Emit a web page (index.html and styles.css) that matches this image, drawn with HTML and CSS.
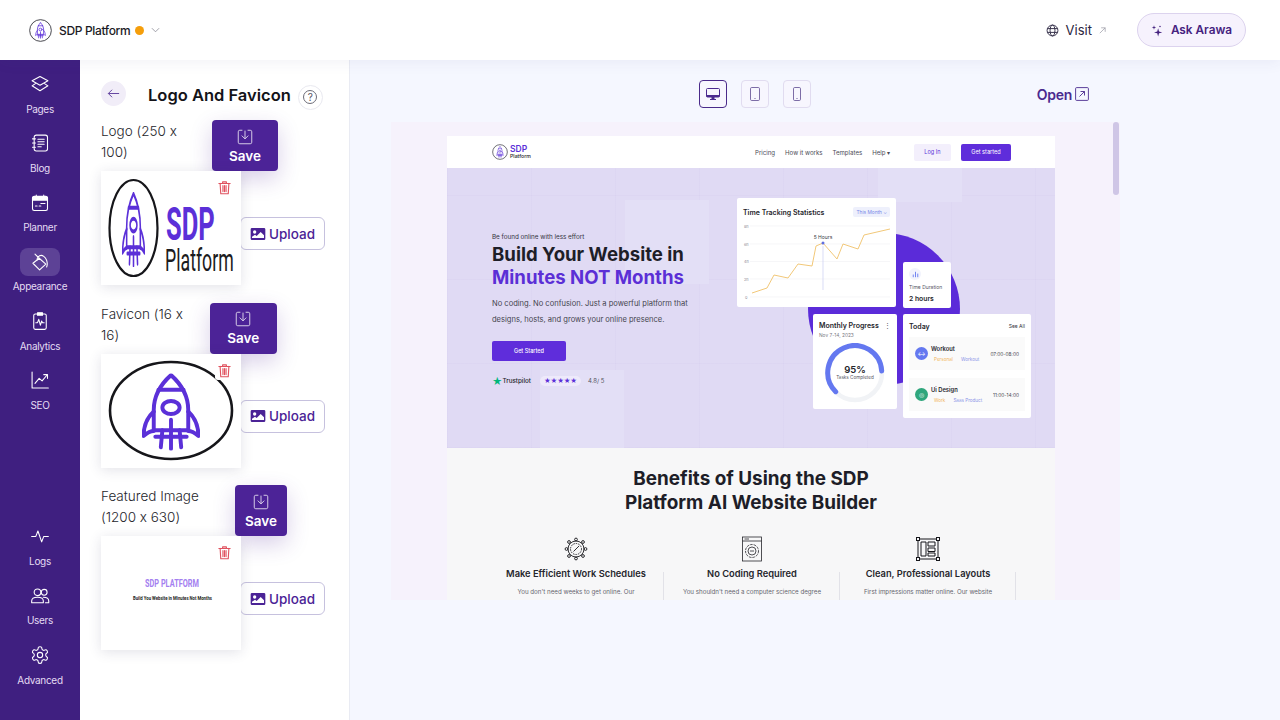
FILE: index.html
```html
<!DOCTYPE html>
<html lang="en">
<head>
<meta charset="utf-8">
<title>Logo And Favicon</title>
<link rel="stylesheet" href="styles.css">
</head>
<body>
<svg class="defs" width="0" height="0" aria-hidden="true">
  <symbol id="rocket" viewBox="13 3 74 95" preserveAspectRatio="none">
    <g fill="none" stroke="#5b30d8" stroke-width="5" stroke-linecap="round" stroke-linejoin="round">
      <path d="M50 5C36 17 28 31 28 48V73H72V48C72 31 64 17 50 5Z"/>
      <path d="M34 23H66"/>
      <ellipse cx="50" cy="45" rx="11" ry="8"/>
      <path d="M28 50C19 58 15 68 15 80C20 76 24 74 28 74"/>
      <path d="M72 50C81 58 85 68 85 80C80 76 76 74 72 74"/>
      <path d="M50 60V96M39 73L37 94M61 73L63 94M30 81H70"/>
    </g>
  </symbol>
  <symbol id="trash" viewBox="0 0 24 24">
    <g fill="none" stroke="#e0525f" stroke-width="1.8" stroke-linecap="round" stroke-linejoin="round">
      <path d="M3 5.500H21M9 5.500V3H15V5.500M5 5.500L6 22H18L19 5.500M9.500 9V18.500M12 9V18.500M14.500 9V18.500"/>
    </g>
  </symbol>
  <symbol id="save" viewBox="0 0 24 24">
    <g fill="none" stroke="#fff" stroke-width="1.200" stroke-linecap="round" stroke-linejoin="round" opacity=".85">
      <path d="M8 3H5A2 2 0 0 0 3 5V19A2 2 0 0 0 5 21H19A2 2 0 0 0 21 19V5A2 2 0 0 0 19 3H16"/>
      <path d="M12 4V14M8 10.500L12 14.500L16 10.500"/>
    </g>
  </symbol>
  <symbol id="picture" viewBox="0 0 24 20">
    <path fill="#4b2396" fill-rule="evenodd" d="M3 1H21A2 2 0 0 1 23 3V17A2 2 0 0 1 21 19H3A2 2 0 0 1 1 17V3A2 2 0 0 1 3 1ZM7 4.500A2.500 2.500 0 1 0 7 9.500A2.500 2.500 0 0 0 7 4.500ZM3 16H21V12L16 7L10 13L7.500 11L3 14Z"/>
  </symbol>
</svg>

<header class="topbar">
  <div class="brand">
    <svg class="brand-logo" viewBox="0 0 24 24"><circle cx="12" cy="12" r="11.300" fill="#fff" stroke="#2b2b33" stroke-width=".9"/><use href="#rocket" x="6.500" y="3.500" width="11" height="17"/></svg>
    <span class="brand-name">SDP Platform</span>
    <span class="status-dot"></span>
    <svg class="chevron" viewBox="0 0 10 6"><path d="M1 1L5 5L9 1" fill="none" stroke="#8b8b96" stroke-width=".9"/></svg>
  </div>
  <div class="top-actions">
    <svg class="globe" viewBox="0 0 24 24"><g fill="none" stroke="#2b2540" stroke-width="1.700"><circle cx="12" cy="12" r="10"/><ellipse cx="12" cy="12" rx="4.500" ry="10"/><path d="M2.500 8.500H21.500M2.500 15.500H21.500"/></g></svg>
    <span class="visit">Visit</span>
    <svg class="visit-arrow" viewBox="0 0 10 10"><path d="M2 8L8 2M3.500 2H8V6.500" fill="none" stroke="#9a9aa6" stroke-width=".8"/></svg>
    <button class="ask">
      <svg class="spark" viewBox="0 0 16 16"><path fill="#45227f" d="M9.500 5L10.700 9.300L15 10.500L10.700 11.700L9.500 16L8.300 11.700L4 10.500L8.300 9.300Z"/><path fill="#45227f" d="M4 1L4.700 3.300L7 4L4.700 4.700L4 7L3.300 4.700L1 4L3.300 3.300Z"/><circle cx="12" cy="2.500" r="1" fill="#45227f"/></svg>
      Ask Arawa
    </button>
  </div>
</header>

<div class="workspace">
  <nav class="rail">
    <div class="rail-group">
      <a class="rail-item"><span class="rail-icon"><svg viewBox="0 0 24 24"><path d="M12 3L2.500 8.200L12 13.400L21.500 8.200Z"/><path d="M6.500 11.500L2.500 14.200L12 20L21.500 14.200L17.500 11.500"/></svg></span><span class="rail-label">Pages</span></a>
      <a class="rail-item"><span class="rail-icon"><svg viewBox="0 0 24 24"><rect x="5" y="2.500" width="16" height="19" rx="2.500"/><path d="M9.500 7.500H17M9.500 10.500H17M9.500 13.500H17M9.500 16.500H13.500M3 7H6.500M3 12H6.500M3 17H6.500"/></svg></span><span class="rail-label">Blog</span></a>
      <a class="rail-item"><span class="rail-icon"><svg viewBox="0 0 24 24"><rect x="3" y="4" width="18" height="17" rx="2"/><path d="M3 5.500H21V8.500H3Z" fill="#fff"/><path d="M7.500 2.500V5M16.500 2.500V5M6.500 15.500H8.500M11 15.500H13M13 12.500H15M16 12.500H18"/></svg></span><span class="rail-label">Planner</span></a>
      <a class="rail-item is-active"><span class="rail-icon"><svg viewBox="0 0 24 24"><path d="M3.500 13.500L11 7.500L19 14.500L11.500 21.500Z"/><path d="M11 7.500L6 2.500M9 9.500C8 8 9.500 5.500 11.500 4.500C15 3 18.500 6 20 10C20.800 12.500 21 15.500 20 18"/></svg></span><span class="rail-label">Appearance</span></a>
      <a class="rail-item"><span class="rail-icon"><svg viewBox="0 0 24 24"><rect x="4.500" y="3.500" width="15" height="18.500" rx="1.800"/><path d="M9 2H15V5H9Z" fill="#fff"/><path d="M7 14H9L10.500 10L12.500 17L14 12L15 14H17"/></svg></span><span class="rail-label">Analytics</span></a>
      <a class="rail-item"><span class="rail-icon"><svg viewBox="0 0 24 24"><path d="M2.500 2.500V21.500H22"/><path d="M6 16L11 10L14.500 13L20.500 6M16.500 5.500H21V10"/></svg></span><span class="rail-label">SEO</span></a>
    </div>
    <div class="rail-group">
      <a class="rail-item"><span class="rail-icon"><svg viewBox="0 0 24 24"><path d="M2 12.500H7L9.500 6L14 19L16.500 12.500H22"/></svg></span><span class="rail-label">Logs</span></a>
      <a class="rail-item"><span class="rail-icon"><svg viewBox="0 0 24 24"><circle cx="9" cy="7.500" r="4"/><circle cx="17" cy="7.500" r="3.500"/><path d="M2 20V18C2 15 5 13.500 9 13.500C13 13.500 16 15 16 18V20Z"/><path d="M16 13.500C19.500 13.500 22.500 15 22.500 18V20H18.500"/></svg></span><span class="rail-label">Users</span></a>
      <a class="rail-item"><span class="rail-icon"><svg viewBox="0 0 24 24"><path d="M12.220 2h-.44a2 2 0 0 0-2 2v.18a2 2 0 0 1-1 1.730l-.43.25a2 2 0 0 1-2 0l-.15-.08a2 2 0 0 0-2.730.73l-.22.38a2 2 0 0 0 .73 2.730l.15.1a2 2 0 0 1 1 1.720v.51a2 2 0 0 1-1 1.740l-.15.09a2 2 0 0 0-.73 2.730l.22.38a2 2 0 0 0 2.730.73l.15-.08a2 2 0 0 1 2 0l.43.25a2 2 0 0 1 1 1.730V20a2 2 0 0 0 2 2h.44a2 2 0 0 0 2-2v-.18a2 2 0 0 1 1-1.730l.43-.25a2 2 0 0 1 2 0l.15.08a2 2 0 0 0 2.730-.73l.22-.39a2 2 0 0 0-.73-2.730l-.15-.08a2 2 0 0 1-1-1.740v-.5a2 2 0 0 1 1-1.740l.15-.09a2 2 0 0 0 .73-2.730l-.22-.38a2 2 0 0 0-2.730-.73l-.15.08a2 2 0 0 1-2 0l-.43-.25a2 2 0 0 1-1-1.730V4a2 2 0 0 0-2-2z"/><circle cx="12" cy="12" r="3.200"/></svg></span><span class="rail-label">Advanced</span></a>
    </div>
  </nav>

  <aside class="panel">
    <div class="panel-head">
      <button class="back"><svg viewBox="0 0 16 16"><path d="M14 8H2.500M6.500 4L2.500 8L6.500 12" fill="none" stroke="#5d3d9c" stroke-width="1"/></svg></button>
      <h1 class="panel-title">Logo And Favicon</h1>
      <span class="help"><span class="help-mark">?</span></span>
    </div>

    <section class="asset">
      <div class="asset-head">
        <div class="asset-label label-logo">Logo (250 x 100)</div>
        <button class="save save-logo"><svg><use href="#save"/></svg>Save</button>
      </div>
      <div class="asset-body">
        <div class="thumb">
          <svg class="thumb-art" viewBox="0 0 140 114">
            <ellipse cx="32.500" cy="57" rx="24" ry="48" fill="none" stroke="#16161a" stroke-width="2.200"/>
            <use href="#rocket" x="21" y="21" width="23" height="75"/>
            <text class="logo-sdp" transform="translate(65 69) scale(.56 1)" textLength="87" lengthAdjust="spacingAndGlyphs">SDP</text>
            <text class="logo-platform" transform="translate(64 100) scale(.55 1)" textLength="125" lengthAdjust="spacingAndGlyphs">Platform</text>
          </svg>
          <span class="trash"><svg><use href="#trash"/></svg></span>
        </div>
        <button class="upload"><svg><use href="#picture"/></svg>Upload</button>
      </div>
    </section>

    <section class="asset">
      <div class="asset-head">
        <div class="asset-label label-favicon">Favicon (16 x 16)</div>
        <button class="save save-favicon"><svg><use href="#save"/></svg>Save</button>
      </div>
      <div class="asset-body">
        <div class="thumb">
          <svg class="thumb-art" viewBox="0 0 140 114">
            <ellipse cx="70" cy="56.500" rx="61" ry="48.500" fill="none" stroke="#16161a" stroke-width="2.600"/>
            <use href="#rocket" x="41" y="19.500" width="58" height="77"/>
          </svg>
          <span class="trash"><svg><use href="#trash"/></svg></span>
        </div>
        <button class="upload"><svg><use href="#picture"/></svg>Upload</button>
      </div>
    </section>

    <section class="asset">
      <div class="asset-head">
        <div class="asset-label label-featured">Featured Image (1200 x 630)</div>
        <button class="save save-featured"><svg><use href="#save"/></svg>Save</button>
      </div>
      <div class="asset-body">
        <div class="thumb">
          <svg class="thumb-art" viewBox="0 0 140 114">
            <text class="feat-title" transform="translate(44 51) scale(.75 1)" textLength="72" lengthAdjust="spacingAndGlyphs">SDP PLATFORM</text>
            <text class="feat-sub" transform="translate(32 64) scale(.65 1)" textLength="121.500" lengthAdjust="spacingAndGlyphs">Build You Website in Minutes Not Months</text>
          </svg>
          <span class="trash"><svg><use href="#trash"/></svg></span>
        </div>
        <button class="upload"><svg><use href="#picture"/></svg>Upload</button>
      </div>
    </section>
  </aside>

  <main class="stage">
    <div class="stage-bar">
      <span></span>
      <div class="devices">
        <button class="device is-current"><svg viewBox="0 0 16 16"><rect x="1.500" y="2.500" width="13" height="8.500" rx="1" fill="none" stroke="#4b2a8f"/><path d="M1.500 9H14.500V11H1.500ZM6.500 11H9.500V13H6.500ZM5 13H11V14H5Z" fill="#4b2a8f"/></svg></button>
        <button class="device"><svg viewBox="0 0 16 16"><rect x="3.500" y="1.500" width="9" height="13" rx="1.200" fill="none" stroke="#5d4a90" stroke-width=".8"/><circle cx="8" cy="12.500" r=".6" fill="#5d4a90"/></svg></button>
        <button class="device"><svg viewBox="0 0 16 16"><rect x="4.500" y="1.500" width="7" height="13" rx="1.200" fill="none" stroke="#5d4a90" stroke-width=".8"/><circle cx="8" cy="12.500" r=".6" fill="#5d4a90"/></svg></button>
      </div>
      <a class="open">Open<svg viewBox="0 0 14 14"><rect x=".6" y=".6" width="12.800" height="12.800" rx="1" fill="none" stroke="#4b2a8f" stroke-width=".9"/><path d="M4.500 9.500L9.500 4.500M5.500 4.500H9.500V8.500" fill="none" stroke="#4b2a8f" stroke-width=".9"/></svg></a>
    </div>

    <div class="preview">
      <span class="scroll-thumb"></span>
      <div class="site">
        <div class="site-nav">
          <div class="site-logo">
            <svg viewBox="0 0 24 24"><circle cx="12" cy="12" r="11" fill="#fff" stroke="#2b2b33" stroke-width="1"/><use href="#rocket" x="6.500" y="3.500" width="11" height="17"/></svg>
            <div class="site-logo-text"><b>SDP</b><span>Platform</span></div>
          </div>
          <div class="site-links">
            <span>Pricing</span><span>How it works</span><span>Templates</span><span>Help ▾</span>
          </div>
          <span class="site-login">Log In</span>
          <span class="site-start">Get started</span>
        </div>

        <div class="hero">
          <div class="hero-copy">
            <p class="eyebrow">Be found online with less effort</p>
            <h2 class="hero-title">Build Your Website in<br><em>Minutes NOT Months</em></h2>
            <p class="hero-text">No coding. No confusion. Just a powerful platform that<br>designs, hosts, and grows your online presence.</p>
            <span class="hero-btn">Get Started</span>
            <div class="trust">
              <span class="tp-star">★</span><span class="tp-name">Trustpilot</span>
              <span class="tp-stars">★★★★★</span><span class="tp-score">4.8/ 5</span>
            </div>
          </div>

          <span class="blob"></span>

          <div class="card card-time">
            <div class="card-row"><b class="card-title">Time Tracking Statistics</b><span class="month">This Month ⌄</span></div>
            <svg class="chart" viewBox="0 0 159 85">
              <g stroke="#f0f0f4" stroke-width=".6"><path d="M13 4H153M13 22H153M13 39.500H153M13 57H153M13 75H153"/></g>
              <g class="axis"><text x="7" y="6">8h</text><text x="7" y="24">6h</text><text x="7" y="41">4h</text><text x="7" y="59">2h</text><text x="8" y="77">0</text></g>
              <path d="M86 24V68" stroke="#c9cdf2" stroke-width=".7"/>
              <path d="M15 71L30 66L37 53L51 56L61 42L75 44L79 24L86 21L100 37L106 22L121 27L127 13L153 7" fill="none" stroke="#f2c879" stroke-width="1"/>
              <circle cx="86" cy="21" r="1.500" fill="#5f6fe0"/>
              <text class="chart-tip" x="86" y="17" text-anchor="middle">5 Hours</text>
            </svg>
          </div>

          <div class="card card-duration">
            <span class="duration-icon"><svg viewBox="0 0 10 10"><path d="M2.500 8V5M5 8V2M7.500 8V4" stroke="#6478f0" stroke-width="1"/></svg></span>
            <span class="duration-label">Time Duration</span>
            <b class="duration-value">2 hours</b>
          </div>

          <div class="card card-progress">
            <div class="card-row"><b class="card-title">Monthly Progress</b><span class="dots">⋮</span></div>
            <span class="progress-date">Nov 7-14, 2023</span>
            <div class="ring">
              <svg viewBox="0 0 60 60"><circle cx="30" cy="30" r="27" fill="none" stroke="#f1f3f6" stroke-width="4.500"/><path d="M10.700 48.700A27 27 0 1 1 56.700 28" fill="none" stroke="#6478f0" stroke-width="5" stroke-linecap="round"/></svg>
              <div class="ring-text"><b>95%</b><span>Tasks Completed</span></div>
            </div>
          </div>

          <div class="card card-today">
            <div class="card-row today-head"><b class="today-title">Today</b><span class="see-all">See All</span></div>
            <div class="today-item">
              <span class="avatar avatar-blue">↔</span>
              <div class="today-main"><b>Workout</b><div class="tags"><i class="tag-y">Personal</i><i class="tag-b">Workout</i></div></div>
              <span class="today-time">07:00-08:00</span>
            </div>
            <div class="today-item">
              <span class="avatar avatar-green">◎</span>
              <div class="today-main"><b>Ui Design</b><div class="tags"><i class="tag-y">Work</i><i class="tag-b">Saas Product</i></div></div>
              <span class="today-time">11:00-14:00</span>
            </div>
          </div>
        </div>

        <div class="benefits">
          <h2 class="benefits-title">Benefits of Using the SDP<br>Platform AI Website Builder</h2>
          <div class="benefit-grid">
            <div class="benefit">
              <svg viewBox="0 0 26 26"><g fill="none" stroke="#17171c" stroke-width=".9"><circle cx="13" cy="13" r="8"/><circle cx="13" cy="13" r="5.500" stroke-dasharray="1.500 1"/><path d="M10.500 15.500L16 10"/><circle cx="13" cy="3.500" r="1.400"/><circle cx="13" cy="22.500" r="1.400"/><circle cx="3.500" cy="13" r="1.400"/><circle cx="22.500" cy="13" r="1.400"/><circle cx="6" cy="6" r="1.400"/><circle cx="20" cy="6" r="1.400"/><circle cx="6" cy="20" r="1.400"/><circle cx="20" cy="20" r="1.400"/></g></svg>
              <h3>Make Efficient Work Schedules</h3>
              <p>You don't need weeks to get online. Our</p>
            </div>
            <div class="benefit">
              <svg viewBox="0 0 26 26"><g fill="none" stroke="#26262c" stroke-width=".8"><rect x="3.500" y="1" width="19" height="24"/><path d="M3.500 5H22.500M5.500 3H10"/><circle cx="13" cy="15" r="6.500" stroke-dasharray="2.500 1"/><circle cx="13" cy="15" r="4"/><path d="M11 15L15 15"/></g></svg>
              <h3>No Coding Required</h3>
              <p>You shouldn't need a computer science degree</p>
            </div>
            <div class="benefit">
              <svg viewBox="0 0 26 26"><g fill="none" stroke="#17171c" stroke-width="1"><path d="M3 3H23V23H3Z"/><rect x="1.500" y="1.500" width="3" height="3" fill="#f7f7f8"/><rect x="21.500" y="1.500" width="3" height="3" fill="#f7f7f8"/><rect x="1.500" y="21.500" width="3" height="3" fill="#f7f7f8"/><rect x="21.500" y="21.500" width="3" height="3" fill="#f7f7f8"/><path d="M6 6H11V20H6ZM13 6H20V10H13ZM13 12H20V15.500H13ZM13 17H20V20H13Z"/></g></svg>
              <h3>Clean, Professional Layouts</h3>
              <p>First impressions matter online. Our website</p>
            </div>
          </div>
        </div>
      </div>
    </div>
  </main>
</div>
</body>
</html>
```
FILE: styles.css
```css
* { box-sizing: border-box; }
html, body { margin: 0; height: 100%; }
body {
  width: 1280px;
  height: 720px;
  overflow: hidden;
  display: flex;
  flex-direction: column;
  font-family: Inter, "Liberation Sans", sans-serif;
  font-feature-settings: "calt" 0;
  color: #17171c;
  background: #f5f7ff;
}
button { font-family: inherit; font-feature-settings: inherit; cursor: pointer; }
p, h1, h2, h3 { margin: 0; }
.defs { position: absolute; }

/* top bar */
.topbar {
  flex: 0 0 60px;
  position: relative;
  z-index: 3;
  display: flex;
  align-items: center;
  justify-content: space-between;
  padding: 0 34px 0 29px;
  background: #fff;
  box-shadow: 0 2px 14px rgba(60, 60, 130, .07);
}
.brand, .top-actions { display: flex; align-items: center; }
.brand-logo { width: 23px; height: 23px; }
.brand-name { margin-left: 7px; font-size: 12px; font-weight: 500; letter-spacing: -.35px; color: #1c1b25; }
.status-dot { width: 9px; height: 9px; margin-left: 5px; border-radius: 50%; background: #f59e0b; }
.chevron { width: 9px; height: 6px; margin-left: 7px; }
.globe { width: 13px; height: 13px; margin-right: 1px; }
.visit { margin-left: 6px; font-size: 13px; color: #2b2540; }
.visit-arrow { width: 9px; height: 9px; margin-left: 6px; }
.ask {
  display: flex;
  align-items: center;
  justify-content: center;
  gap: 8px;
  width: 109px;
  height: 34px;
  margin-left: 30px;
  padding: 0;
  border: 1px solid #dcd3ee;
  border-radius: 17px;
  background: #f6f2fd;
  font-size: 11.8px;
  font-weight: 600;
  color: #45227f;
}
.spark { width: 12px; height: 13px; }

.workspace { flex: 1; display: flex; min-height: 0; }

/* rail */
.rail {
  flex: 0 0 80px;
  display: flex;
  flex-direction: column;
  justify-content: space-between;
  padding: 10px 0 33.5px;
  background: #3f1f80;
}
.rail-group { display: flex; flex-direction: column; gap: 13.8px; }
.rail-item { display: flex; flex-direction: column; align-items: center; }
.rail-icon {
  display: flex;
  align-items: center;
  justify-content: center;
  width: 40px;
  height: 28px;
  border-radius: 8px;
}
.rail-icon svg {
  width: 20px;
  height: 20px;
  fill: none;
  stroke: #fff;
  stroke-width: 1.3;
  stroke-linejoin: round;
  stroke-linecap: round;
}
.rail-label { margin-top: 3.5px; font-size: 10px; letter-spacing: -.3px; line-height: 14px; color: #e4dcf3; }
.is-active .rail-icon { background: #5d4296; }

/* left panel */
.panel {
  flex: 0 0 270px;
  padding: 21px 0 0 21px;
  background: #fff;
  border-right: 1px solid #e9ebf3;
}
.panel-head { display: flex; align-items: center; height: 29px; margin-bottom: 10px; }
.back {
  width: 25px;
  height: 25px;
  padding: 5px;
  border: 0;
  border-radius: 50%;
  background: #f1edf8;
  transform: translateY(-2px);
}
.back svg { display: block; width: 15px; height: 15px; }
.panel-title { margin: 0 0 2px 22px; font-size: 16.5px; font-weight: 600; color: #131318; white-space: nowrap; }
.help {
  display: flex;
  align-items: center;
  justify-content: center;
  width: 25px;
  height: 25px;
  margin: 3px 0 0 7px;
  border: 1px solid #e9e9f0;
  border-radius: 50%;
}
.help-mark {
  width: 14px;
  height: 14px;
  border: 1px solid #6c6c78;
  border-radius: 50%;
  font-size: 10px;
  line-height: 12px;
  text-align: center;
  color: #55555f;
}
.asset { margin-bottom: 17.5px; }
.asset-head { display: flex; height: 51px; }
.asset-label {
  flex: none;
  padding-top: 1px;
  font-size: 13.5px;
  font-weight: 300;
  line-height: 21px;
  color: #26262c;
}
.label-logo { width: 111px; padding-right: 20px; }
.label-favicon { width: 108.5px; padding-right: 10px; }
.label-featured { width: 134px; }
.save {
  display: flex;
  flex-direction: column;
  align-items: center;
  justify-content: center;
  gap: 2px;
  height: 51px;
  padding: 0;
  border: 0;
  border-radius: 4px;
  background: #4c2397;
  box-shadow: 0 8px 22px rgba(76, 35, 151, .22);
  font-size: 13.5px;
  font-weight: 600;
  color: #fff;
}
.save svg { width: 18px; height: 18px; }
.save-logo { width: 66px; }
.save-favicon { width: 67.5px; }
.save-featured { width: 52px; }
.asset-body { display: flex; align-items: center; }
.thumb {
  position: relative;
  flex: none;
  width: 140px;
  height: 114px;
  background: #fff;
  box-shadow: 0 2px 12px rgba(50, 50, 90, .14);
}
.thumb-art { display: block; width: 140px; height: 114px; }
.trash {
  position: absolute;
  top: 7px;
  right: 7px;
  width: 19px;
  height: 19px;
  padding: 2px;
  border-radius: 3px;
  background: #fff;
}
.trash svg { display: block; width: 15px; height: 15px; }
.logo-sdp { font-family: Roboto, sans-serif; font-size: 47px; font-weight: 700; fill: #5b30d8; }
.logo-platform { font-family: Roboto, sans-serif; font-size: 32px; font-weight: 400; fill: #1b1b20; }
.feat-title { font-family: Roboto, sans-serif; font-size: 10px; font-weight: 700; fill: #a47ff0; }
.feat-sub { font-family: Roboto, sans-serif; font-size: 6px; font-weight: 700; fill: #1b1b20; }
.upload {
  display: flex;
  align-items: center;
  justify-content: center;
  gap: 3px;
  width: 85px;
  height: 33px;
  margin: 11px 0 0 -1px;
  padding: 0;
  border: 1px solid #c6c1de;
  border-radius: 6px;
  background: #fff;
  font-size: 13.5px;
  font-weight: 500;
  color: #4b2396;
}
.upload svg { width: 16px; height: 14px; }

/* stage */
.stage { flex: 1; min-width: 0; padding: 20px 160px 0 41px; }
.stage-bar {
  display: grid;
  grid-template-columns: 1fr auto 1fr;
  align-items: center;
  height: 28px;
  margin-bottom: 14px;
  padding: 0 31px 0 30px;
}
.devices { display: flex; gap: 14px; }
.device {
  width: 28px;
  height: 28px;
  padding: 5px;
  border: 1px solid #e1dcf0;
  border-radius: 4px;
  background: #f7f6fe;
}
.device svg { display: block; width: 16px; height: 16px; }
.device.is-current { border-color: #4a2a8a; }
.open {
  justify-self: end;
  display: flex;
  align-items: center;
  gap: 3px;
  font-size: 14px;
  font-weight: 600;
  letter-spacing: -.25px;
  color: #4b2a8f;
}
.open svg { width: 14px; height: 14px; }

.preview {
  position: relative;
  width: 729px;
  height: 478px;
  overflow: hidden;
  padding: 14px 0 0 56px;
  background: #f6f2fc;
}
.scroll-thumb {
  position: absolute;
  top: 0;
  right: 1px;
  width: 6px;
  height: 73px;
  border-radius: 3px;
  background: #cfc6e6;
}
.site { width: 608px; }
.site-nav {
  display: flex;
  align-items: center;
  height: 32px;
  padding: 0 44px 0 45px;
  background: #fff;
  font-size: 6.1px;
  color: #4a4a55;
}
.site-logo { display: flex; align-items: center; gap: 2px; width: 263px; }
.site-logo svg { width: 16px; height: 16px; }
.site-logo-text { display: flex; flex-direction: column; line-height: 1; }
.site-logo-text b { font-size: 8.5px; font-weight: 600; color: #5b30d8; line-height: 8px; }
.site-logo-text span { font-size: 5.2px; font-weight: 500; color: #26262c; line-height: 6px; }
.site-links { display: flex; gap: 10px; width: 159px; white-space: nowrap; }
.site-login, .site-start {
  display: flex;
  align-items: center;
  justify-content: center;
  height: 17px;
  border-radius: 2px;
  font-size: 5.6px;
}
.site-login { width: 37px; background: #f3effc; color: #5b30d8; }
.site-start { width: 50px; margin-left: 10px; background: #5f2ddb; color: #fff; }

.hero {
  position: relative;
  height: 280px;
  padding: 65px 0 0 45px;
  background-color: #e0daf4;
  background-image:
    linear-gradient(#e3dff6, #e3dff6),
    linear-gradient(#e3dff6, #e3dff6),
    linear-gradient(#e3dff6, #e3dff6),
    repeating-linear-gradient(90deg, rgba(120, 100, 190, .03) 0 1px, transparent 1px 84px),
    repeating-linear-gradient(0deg, rgba(120, 100, 190, .03) 0 1px, transparent 1px 84px);
  background-repeat: no-repeat, no-repeat, no-repeat, repeat, repeat;
  background-size: 84px 84px, 84px 34px, 84px 78px, auto, auto;
  background-position: 178px 32px, 431px 0, 93px 202px, 0 0, 0 0;
}
.hero-copy { position: relative; width: 215px; }
.eyebrow { font-size: 6.3px; line-height: 8px; color: #33333c; }
.hero-title {
  margin-top: 2px;
  font-size: 18.6px;
  font-weight: 700;
  line-height: 23px;
  color: #1e1e28;
  white-space: nowrap;
}
.hero-title em { font-style: normal; color: #5b2fd6; }
.hero-text {
  margin-top: 6.5px;
  font-size: 7.55px;
  line-height: 16px;
  color: #45454f;
  white-space: nowrap;
}
.hero-btn {
  display: flex;
  align-items: center;
  justify-content: center;
  width: 74px;
  height: 20px;
  margin-top: 13px;
  border-radius: 2px;
  background: #5f2ddb;
  font-size: 5.5px;
  font-weight: 500;
  color: #fff;
}
.trust { display: flex; align-items: center; margin-top: 14px; white-space: nowrap; }
.tp-star { font-size: 10px; line-height: 12px; color: #00b67a; }
.tp-name { margin-left: 0; font-size: 6.3px; font-weight: 500; color: #26262c; }
.tp-stars {
  margin-left: 9px;
  padding: 1px 4px;
  border-radius: 5px;
  background: #eeeafb;
  font-size: 6.5px;
  letter-spacing: -.2px;
  color: #5b30d8;
}
.tp-score { margin-left: 7px; font-size: 6px; color: #55555f; }

.blob {
  position: absolute;
  left: 361px;
  top: 65px;
  width: 152px;
  height: 152px;
  border-radius: 50%;
  background: #5b2bd9;
}
.card { position: absolute; border-radius: 2px; background: #fff; }
.card-row { display: flex; align-items: center; justify-content: space-between; }
.card-title { font-size: 7px; font-weight: 600; color: #26262c; white-space: nowrap; }
.card-time { left: 290px; top: 30px; width: 159px; height: 109px; padding: 9px 6px 0; }
.month {
  padding: 2px 3px;
  border-radius: 2px;
  background: #eef0fc;
  font-size: 4.8px;
  color: #7b88e8;
}
.chart { position: absolute; left: 0; top: 24px; width: 159px; height: 85px; }
.axis { font-size: 3.8px; fill: #8b8b96; }
.chart-tip { font-size: 5px; fill: #3a3a44; }
.card-duration {
  left: 456px;
  top: 94px;
  width: 48px;
  height: 46px;
  padding: 6px 6px 0;
  display: flex;
  flex-direction: column;
  align-items: flex-start;
}
.duration-icon {
  width: 12px;
  height: 12px;
  padding: 1.5px;
  border-radius: 50%;
  background: #f2f3fd;
}
.duration-icon svg { display: block; width: 9px; height: 9px; }
.duration-label { margin-top: 3px; font-size: 5px; line-height: 8px; color: #55555f; white-space: nowrap; }
.duration-value { margin-top: 3px; font-size: 6.8px; font-weight: 600; color: #26262c; white-space: nowrap; }
.card-progress { left: 366px; top: 146px; width: 84px; height: 95px; padding: 7px 6px 0; }
.dots { font-size: 7px; line-height: 8px; color: #55555f; }
.progress-date { display: block; margin-top: 2px; font-size: 4.8px; color: #77777f; }
.ring { position: absolute; left: 12px; top: 29px; width: 60px; height: 60px; }
.ring svg { display: block; width: 60px; height: 60px; }
.ring-text {
  position: absolute;
  inset: 0;
  display: flex;
  flex-direction: column;
  align-items: center;
  justify-content: center;
}
.ring-text b { font-size: 9.5px; line-height: 10px; font-weight: 600; color: #26262c; }
.ring-text span { font-size: 4.6px; line-height: 6px; color: #55555f; white-space: nowrap; }
.card-today { left: 456px; top: 146px; width: 128px; height: 104px; padding: 7px 6px 0; }
.today-head { height: 10px; margin-bottom: 6px; }
.today-title { font-size: 7px; font-weight: 600; color: #26262c; }
.see-all { font-size: 5px; color: #33333c; }
.today-item {
  display: flex;
  align-items: center;
  height: 33px;
  margin-bottom: 8px;
  padding: 0 6px;
  background: #fafafa;
}
.avatar {
  flex: none;
  display: flex;
  align-items: center;
  justify-content: center;
  width: 13px;
  height: 13px;
  border-radius: 50%;
  font-size: 6px;
  color: #fff;
}
.avatar-blue { background: #6478f0; }
.avatar-green { background: #2fa67c; }
.today-main { flex: 1; margin-left: 3px; }
.today-main b { display: block; font-size: 5.8px; line-height: 9px; font-weight: 600; color: #26262c; }
.tags { display: flex; gap: 8px; margin-top: 4px; padding-left: 3px; }
.tags i { font-style: normal; font-size: 4.6px; line-height: 6px; white-space: nowrap; }
.tag-y { color: #f2b65c; }
.tag-b { color: #8c95e8; }
.today-time { font-size: 4.8px; color: #45454f; white-space: nowrap; }

.benefits { height: 152px; padding-top: 19px; background: #f7f7f8; }
.benefits-title {
  font-size: 18.9px;
  font-weight: 700;
  line-height: 24px;
  text-align: center;
  color: #1e1e28;
}
.benefit-grid { display: flex; margin: 21px 0 0 41px; }
.benefit {
  flex: none;
  position: relative;
  width: 176px;
  text-align: center;
}
.benefit::after {
  content: "";
  position: absolute;
  right: 0;
  top: 36px;
  width: 1px;
  height: 40px;
  background: #e2e2e8;
}
.benefit svg { display: block; width: 26px; height: 26px; margin: 0 auto; }
.benefit h3 { margin-top: 5.5px; font-size: 9.3px; font-weight: 600; line-height: 11px; color: #26262c; white-space: nowrap; }
.benefit p { margin-top: 9px; font-size: 6.2px; line-height: 8px; color: #66666f; white-space: nowrap; }
```
